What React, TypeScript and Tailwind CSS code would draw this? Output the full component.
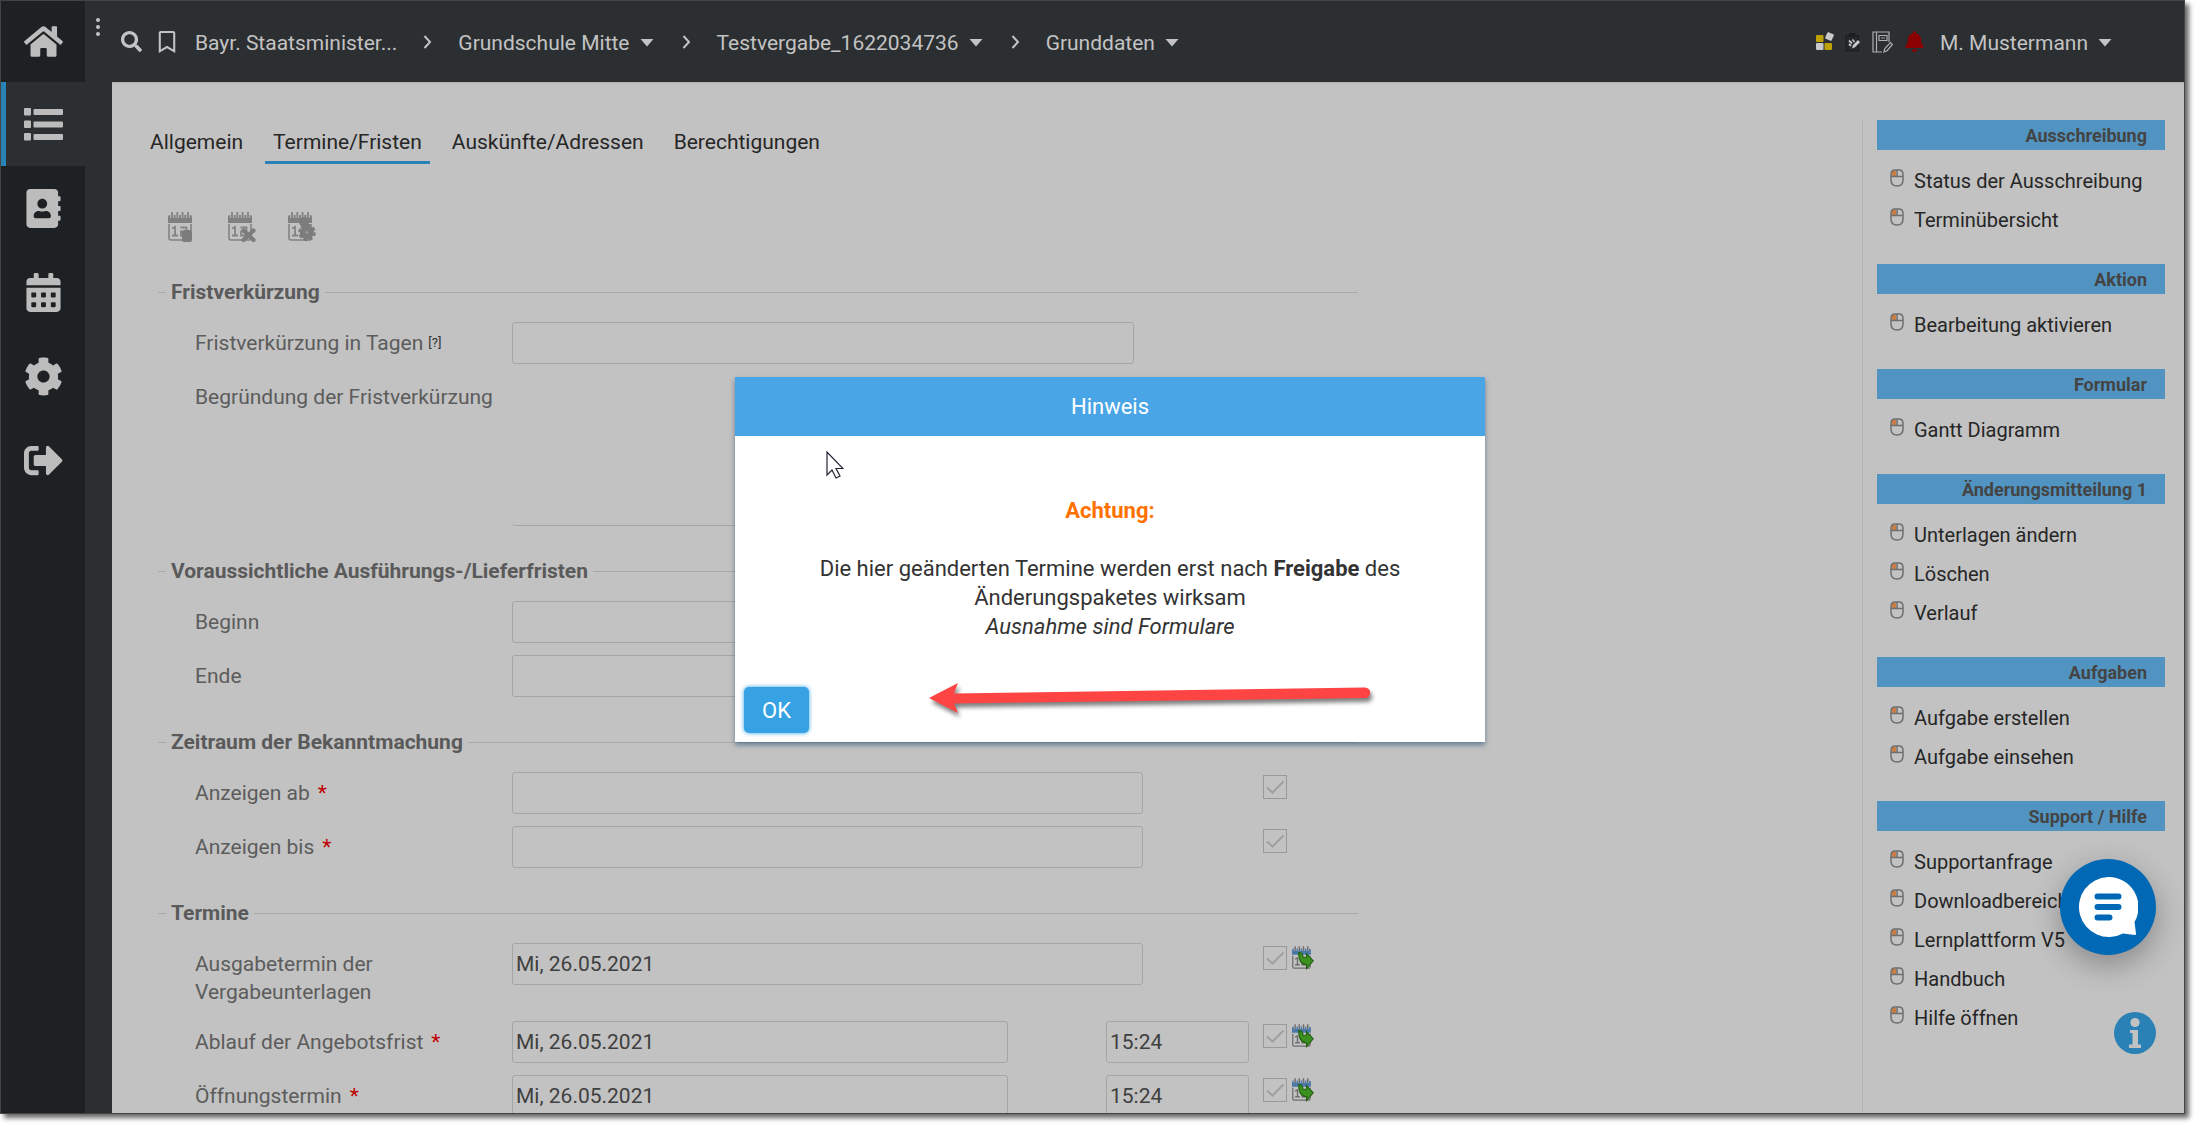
import React, { useState } from "react";
import {
  FaAddressBook,
  FaBell,
  FaCalendarAlt,
  FaCog,
  FaHome,
  FaRegBookmark,
  FaSearch,
  FaSignOutAlt,
} from "react-icons/fa";

type IconProps = { className?: string };

const ListIcon: React.FC<IconProps> = ({ className }) => (
  <svg viewBox="0 0 39 33" className={className} fill="currentColor">
    {[0, 12.5, 25].map((y) => (
      <g key={y}>
        <rect x="0" y={y} width="7" height="7.5" rx="1" />
        <rect x="9.5" y={y + 1} width="29.5" height="6" rx="1" />
      </g>
    ))}
  </svg>
);

const Caret: React.FC = () => (
  <svg viewBox="0 0 14 8" className="mr-0.5 h-2 w-3.5" fill="currentColor">
    <path d="M0.5 0h13L7 7.5z" />
  </svg>
);

const Chevron: React.FC = () => (
  <svg
    viewBox="0 0 9 14"
    className="h-3.5 w-[9px]"
    fill="none"
    stroke="currentColor"
    strokeWidth="2"
  >
    <path d="M1.5 1l5.5 6-5.5 6" />
  </svg>
);

const MouseIcon: React.FC = () => (
  <svg viewBox="0 0 14 18" className="mt-0.5 h-[18px] w-3.5 shrink-0" fill="none">
    <rect x="2" y="2" width="4" height="5" fill="#cc7c45" />
    <path
      d="M1 5.5C1 2.5 2.5 1 5 1h4c2.500 0 4 1.500 4 4.500v5.500c0 4-2.500 6-6 6s-6-2-6-6zM1 7.500h12M7 1v6.500"
      stroke="#6f6f6f"
      strokeWidth="1.500"
    />
  </svg>
);

const CalendarBase: React.FC<{ top: string; ink: string }> = ({ top, ink }) => (
  <>
    <path d="M1 12v14a2 2 0 0 0 2 2h18a2 2 0 0 0 2-2V12" fill="none" stroke={ink} strokeWidth="1.600" />
    <path d="M0 11V5a2 2 0 0 1 2-2h20a2 2 0 0 1 2 2v6z" fill={top} />
    <path d="M4 0v6M9.300 0v6M14.600 0v6M20 0v6" stroke="#c2c2c2" strokeWidth="3.400" />
    <path d="M4 0v6M9.300 0v6M14.600 0v6M20 0v6" stroke={ink} strokeWidth="1.800" />
    <path d="M4 16.500l3-1.500v8.500M4 23.500h6M12.500 15.500h6v4h-5.500v4h6" fill="none" stroke={ink} strokeWidth="1.800" />
  </>
);

const ToolbarCalendar: React.FC<{ kind: string }> = ({ kind }) => (
  <svg viewBox="0 0 28 30" className="h-[30px] w-7">
    <CalendarBase top="#808080" ink="#838383" />
    {kind === "trash" && <path d="M14 20l2-2h6l2 2v8a2 2 0 0 1-2 2h-6a2 2 0 0 1-2-2z" fill="#7c7c7c" />}
    {kind === "cross" && (
      <path d="M15.500 18.500l10 9.500M25.500 18.500l-10 9.500" stroke="#7c7c7c" strokeWidth="4.200" strokeLinecap="round" />
    )}
    {kind === "gear" && (
      <g fill="#7c7c7c">
        <circle cx="16" cy="10" r="5" />
        <circle cx="19" cy="20.500" r="7" />
        <circle cx="19" cy="20.500" r="7.600" fill="none" stroke="#7c7c7c" strokeWidth="2.400" strokeDasharray="3.500 2.470" />
        <circle cx="19" cy="20.500" r="1.500" fill="#999" />
      </g>
    )}
  </svg>
);

const TransferIcon: React.FC = () => (
  <svg viewBox="0 0 28 30" className="h-6 w-[22px]">
    <CalendarBase top="#4a78a8" ink="#6d6d6d" />
    <path
      d="M8.500 8c4 0 5.500 2 5.500 6h4.500V9.500l8.500 9-8.500 10V23.500c-6.500 0-10-5-10-15.500z"
      fill="#3c9020"
      stroke="#20600f"
      strokeWidth="1.400"
    />
  </svg>
);

const TilesIcon: React.FC = () => (
  <svg viewBox="0 0 18 19" className="h-[19px] w-[18px]">
    <rect x="0" y="3" width="7.500" height="7" rx="1" fill="#bfa106" />
    <rect x="0" y="11" width="7.500" height="7" rx="1" fill="#c9c9c9" />
    <rect x="8.500" y="11" width="7.500" height="7" rx="1" fill="#bfa106" />
    <rect x="10" y="1" width="7" height="7" rx="1" fill="#c9c9c9" transform="rotate(24 13.500 4.500)" />
  </svg>
);

const ClipboardIcon: React.FC = () => (
  <svg viewBox="0 0 16 20" className="h-5 w-4">
    <path d="M1 3.500h3V2h6v1.500h3.500V19H1z" fill="#24282a" stroke="#191c1e" />
    <path d="M4 1h6v4H4z" fill="#1a1d1f" />
    <path d="M4 8.500l3 3M4 12l2 2" stroke="#c2c2c2" strokeWidth="1.800" />
    <path d="M7 16.500l1-3.500 5-5 2 2.200-5 5z" fill="#c9c9c9" />
    <path d="M9.500 10l-2-2.500" stroke="#c2c2c2" strokeWidth="1.500" />
  </svg>
);

const NotebookIcon: React.FC = () => (
  <svg viewBox="0 0 21 22" className="h-[22px] w-[21px]" fill="none" stroke="#aeb0b1" strokeWidth="1.200">
    <path d="M10 21H1V1h16v10M4.500 1v20M7 4.500h8v5H7zM12 21l.800-3.500 5.700-6 2 2-5.500 6.200z" />
    <path d="M9 7h4" stroke="#8b8e90" />
  </svg>
);

const SIDEBAR = [
  { title: "Übersicht", icon: <ListIcon className="h-[33px] w-[39px]" />, active: true },
  { title: "Adressbuch", icon: <FaAddressBook size={39} /> },
  { title: "Kalender", icon: <FaCalendarAlt size={39} /> },
  { title: "Einstellungen", icon: <FaCog size={39} /> },
  { title: "Abmelden", icon: <FaSignOutAlt size={39} /> },
];

const CRUMBS = [
  { label: "Bayr. Staatsminister...", menu: false },
  { label: "Grundschule Mitte", menu: true },
  { label: "Testvergabe_1622034736", menu: true },
  { label: "Grunddaten", menu: true },
];

const TABS = ["Allgemein", "Termine/Fristen", "Auskünfte/Adressen", "Berechtigungen"];

const ACTIONS = [
  { title: "Ausschreibung", links: ["Status der Ausschreibung", "Terminübersicht"] },
  { title: "Aktion", links: ["Bearbeitung aktivieren"] },
  { title: "Formular", links: ["Gantt Diagramm"] },
  { title: "Änderungsmitteilung 1", links: ["Unterlagen ändern", "Löschen", "Verlauf"] },
  { title: "Aufgaben", links: ["Aufgabe erstellen", "Aufgabe einsehen"] },
  {
    title: "Support / Hilfe",
    links: ["Supportanfrage", "Downloadbereich", "Lernplattform V5", "Handbuch", "Hilfe öffnen"],
  },
];

const inputClass =
  "h-[42px] min-w-0 rounded-[3px] border border-[#a6a6a6] bg-transparent px-[3px] text-[#3f3f3f] outline-none";

const Section: React.FC<{ title: string; children: React.ReactNode }> = ({ title, children }) => (
  <section className="mb-[31px]">
    <div className="mb-4 flex h-7 items-center gap-[5px]">
      <span className="h-px w-2 bg-[#a9a9a9]" />
      <h2 className="font-bold text-[#5a5a5a]">{title}</h2>
      <span className="h-px flex-1 bg-[#a9a9a9]" />
    </div>
    <div className="flex flex-col gap-3 pl-[37px]">{children}</div>
  </section>
);

type RowProps = {
  id: string;
  label: string;
  required?: boolean;
  hint?: boolean;
  extra?: React.ReactNode;
  children: React.ReactNode;
};

const Row: React.FC<RowProps> = ({ id, label, required, hint, extra, children }) => (
  <div className="flex items-start">
    <div className="flex w-[317px] shrink-0 pt-[7px] pb-[3px] text-[#5c5c5c]">
      <label htmlFor={id} className="max-w-[300px]">
        {label}
        {required && <span className="ml-2 text-[#c00000]">*</span>}
      </label>
      {hint && <a href="#hilfe" className="ml-[5px] text-[13px] text-[#333]">[?]</a>}
    </div>
    <div className="flex flex-1 justify-between pr-3.5">{children}</div>
    <div className="flex w-[95px] shrink-0 items-start gap-[5px] pt-[3px]">{extra}</div>
  </div>
);

const Check: React.FC<{ label: string }> = ({ label }) => (
  <span className="relative flex h-6 w-6">
    <input
      type="checkbox"
      aria-label={label}
      defaultChecked
      className="peer h-6 w-6 appearance-none border border-[#999]"
    />
    <svg
      viewBox="0 0 24 24"
      className="pointer-events-none absolute inset-0 hidden peer-checked:block"
      fill="none"
      stroke="#a0a0a0"
      strokeWidth="2"
    >
      <path d="M4 12.500l5.500 5L20.500 6.500" />
    </svg>
  </span>
);

const DateTimeRow: React.FC<{ id: string; label: string }> = ({ id, label }) => (
  <Row
    id={id}
    label={label}
    required
    extra={
      <>
        <Check label={`${label} anzeigen`} />
        <button type="button" aria-label="Termin übernehmen"><TransferIcon /></button>
      </>
    }
  >
    <input id={id} defaultValue="Mi, 26.05.2021" className={`${inputClass} w-[496px]`} />
    <input aria-label={`${label} Uhrzeit`} defaultValue="15:24" className={`${inputClass} w-[143px]`} />
  </Row>
);

const Hinweis: React.FC<{ onClose: () => void }> = ({ onClose }) => (
  <div className="absolute inset-0 flex items-center justify-center pt-1 pl-[35px]">
    <div
      role="dialog"
      aria-label="Hinweis"
      className="relative w-[750px] bg-white text-[22px] shadow-[0_3px_5px_rgba(40,80,120,0.6)]"
    >
      <h2 className="flex h-[59px] items-center justify-center bg-[#49a5e5] pt-0.5 text-white">Hinweis</h2>
      <div className="px-20 pt-[60px] text-center leading-[29px] text-[#333]">
        <p className="mb-[29px] font-bold text-[#ff7200]">Achtung:</p>
        <p>
          Die hier geänderten Termine werden erst nach <b>Freigabe</b> des Änderungspaketes wirksam
        </p>
        <p className="italic">Ausnahme sind Formulare</p>
      </div>
      <div className="px-[9px] pt-[46px] pb-[9px]">
        <button
          onClick={onClose}
          className="h-[46px] w-[65px] rounded-[5px] bg-[#36a2e3] pt-0.5 text-white shadow-[0_0_4px_#36a2e3]"
        >
          OK
        </button>
      </div>
      <svg viewBox="0 0 18 28" className="absolute top-[74px] left-[91px] h-7 w-[18px]">
        <path d="M1 1v23l5-5 4 8 4-2-4-7.500h7z" fill="#fff" stroke="#223" strokeWidth="1.200" />
      </svg>
      <svg
        viewBox="0 0 450 40"
        className="absolute top-[301px] left-[190px] h-10 w-[450px] drop-shadow-[2px_4px_2px_rgba(0,0,0,0.5)]"
      >
        <path
          d="M4 20L33 5l-4 10.500L440 9.500a5 5 0 0 1 0 10.500L29 25.500 33 35z"
          fill="#ff4444"
        />
      </svg>
    </div>
  </div>
);

const App: React.FC = () => {
  const [tab, setTab] = useState("Termine/Fristen");
  const [open, setOpen] = useState(true);

  return (
    <div className="h-screen overflow-hidden bg-white pr-[15px] pb-[15px] font-[Roboto,sans-serif] text-[21px] leading-7">
      <div className="relative flex h-full border border-[#444] bg-[#2b2f31] shadow-[4px_4px_5px_rgba(0,0,0,0.6)]">
        <nav className="flex w-[84px] shrink-0 flex-col bg-[#1e2123] text-[#bcbcbc]">
          <button aria-label="Startseite" className="flex h-[81px] items-center justify-center">
            <FaHome size={39} />
          </button>
          {SIDEBAR.map((item) => (
            <button
              key={item.title}
              aria-label={item.title}
              className={
                item.active
                  ? "flex h-[84px] items-center justify-center border-l-5 border-[#2a81b5] bg-[#2b2f31] pr-[5px]"
                  : "flex h-[84px] items-center justify-center"
              }
            >
              {item.icon}
            </button>
          ))}
        </nav>

        <div className="flex min-w-0 flex-1 flex-col">
          <header className="flex h-[81px] shrink-0 items-center text-[#c3c3c3]">
            <button aria-label="Menü" className="mr-[21px] ml-[11px] flex h-12 flex-col gap-[3px]">
              <span className="h-1 w-1 rounded-full bg-current" />
              <span className="h-1 w-1 rounded-full bg-current" />
              <span className="h-1 w-1 rounded-full bg-current" />
            </button>
            <button aria-label="Suche"><FaSearch size={21} /></button>
            <button aria-label="Merken" className="mr-[17px] ml-3.5"><FaRegBookmark size={22} /></button>
            <div className="flex items-center gap-[26px]">
              {CRUMBS.map((crumb, i) => (
                <React.Fragment key={crumb.label}>
                  {i > 0 && <Chevron />}
                  <button className="flex items-center gap-2.5 pt-0.5">
                    {crumb.label}
                    {crumb.menu && <Caret />}
                  </button>
                </React.Fragment>
              ))}
            </div>
            <div className="mr-[70px] ml-auto flex items-center gap-[11px]">
              <TilesIcon />
              <ClipboardIcon />
              <NotebookIcon />
              <FaBell size={21} className="text-[#8b0000]" />
              <button className="ml-1 flex items-center gap-2.5 pt-0.5">
                M. Mustermann
                <Caret />
              </button>
            </div>
          </header>

          <div className="ml-[27px] flex min-h-0 flex-1 overflow-hidden border-t border-[#b0b0b0] bg-[#c2c2c2]">
            <main className="min-w-0 flex-1 overflow-hidden pt-[45px] pl-[30px]">
              <div className="flex gap-3.5 text-[#262626]" role="tablist">
                {TABS.map((name) => (
                  <button
                    key={name}
                    role="tab"
                    aria-selected={name === tab}
                    onClick={() => setTab(name)}
                    className={
                      name === tab
                        ? "border-b-3 border-[#2a81b5] px-2 pb-[5px]"
                        : "border-b-3 border-transparent px-2 pb-[5px]"
                    }
                  >
                    {name}
                  </button>
                ))}
              </div>

              <div className="mt-12 mb-9 ml-[26px] flex gap-8">
                <button aria-label="Termine löschen"><ToolbarCalendar kind="trash" /></button>
                <button aria-label="Termine verwerfen"><ToolbarCalendar kind="cross" /></button>
                <button aria-label="Termine berechnen"><ToolbarCalendar kind="gear" /></button>
              </div>

              <form className="ml-4 max-w-[1200px]">
                <Section title="Fristverkürzung">
                  <Row id="tage" label="Fristverkürzung in Tagen" hint>
                    <input id="tage" className={`${inputClass} w-[622px]`} />
                  </Row>
                  <Row id="grund" label="Begründung der Fristverkürzung">
                    <textarea
                      id="grund"
                      className="h-[150px] w-[622px] resize-none rounded-[3px] border-b border-[#a6a6a6] bg-transparent outline-none"
                    />
                  </Row>
                </Section>
                <Section title="Voraussichtliche Ausführungs-/Lieferfristen">
                  <Row id="beginn" label="Beginn">
                    <input id="beginn" className={`${inputClass} w-[622px]`} />
                  </Row>
                  <Row id="ende" label="Ende">
                    <input id="ende" className={`${inputClass} w-[622px]`} />
                  </Row>
                </Section>
                <Section title="Zeitraum der Bekanntmachung">
                  <Row id="ab" label="Anzeigen ab" required extra={<Check label="Anzeigen ab aktiv" />}>
                    <input id="ab" className={`${inputClass} w-[631px]`} />
                  </Row>
                  <Row id="bis" label="Anzeigen bis" required extra={<Check label="Anzeigen bis aktiv" />}>
                    <input id="bis" className={`${inputClass} w-[631px]`} />
                  </Row>
                </Section>
                <Section title="Termine">
                  <Row
                    id="ausgabe"
                    label="Ausgabetermin der Vergabeunterlagen"
                    extra={
                      <>
                        <Check label="Ausgabetermin anzeigen" />
                        <button type="button" aria-label="Termin übernehmen"><TransferIcon /></button>
                      </>
                    }
                  >
                    <input id="ausgabe" defaultValue="Mi, 26.05.2021" className={`${inputClass} w-[631px]`} />
                  </Row>
                  <DateTimeRow id="ablauf" label="Ablauf der Angebotsfrist" />
                  <DateTimeRow id="oeffnung" label="Öffnungstermin" />
                </Section>
              </form>
            </main>

            <aside className="mt-[37px] w-[322px] shrink-0 border-l border-[#b3b3b3] pr-[19px] pl-3.5">
              {ACTIONS.map((group) => (
                <div key={group.title} className="mb-[25px]">
                  <h3 className="mb-[11px] flex h-[30px] items-center justify-end bg-[#5294c1] pt-0.5 pr-[18px] text-[18px] font-bold text-[#444]">
                    {group.title}
                  </h3>
                  <ul>
                    {group.links.map((link) => (
                      <li key={link} className="h-[39px] pl-[13px]">
                        <a href="#aktion" className="flex gap-2.5 pt-[6px] text-[20px] text-[#262626]">
                          <MouseIcon />
                          {link}
                        </a>
                      </li>
                    ))}
                  </ul>
                </div>
              ))}
            </aside>
          </div>
        </div>

        <div className="absolute right-7 bottom-[59px] flex flex-col items-end gap-[57px]">
          <button
            aria-label="Chat öffnen"
            className="flex h-24 w-24 items-center justify-center rounded-full bg-[#0068b4] shadow-[0_10px_30px_rgba(0,0,0,0.3)]"
          >
            <svg viewBox="0 0 60 60" className="h-[60px] w-[60px]">
              <path d="M30 0a30 30 0 1 0 15 56.500l12 1.500c.800 0 1.200-.500 1-1.300L56.500 45A30 30 0 0 0 30 0z" fill="#fff" />
              <path d="M19.500 19.500h21M19.500 30h21M19.500 40.500h12" stroke="#0068b4" strokeWidth="6" strokeLinecap="round" />
            </svg>
          </button>
          <button aria-label="Information">
            <svg viewBox="0 0 42 42" className="h-[42px] w-[42px]">
              <circle cx="21" cy="21" r="21" fill="#2a81b5" />
              <circle cx="21" cy="10.500" r="4.600" fill="#c2c2c2" />
              <path d="M16 18h8v14.500h3V36H15v-3.500h3.500V21H16z" fill="#c2c2c2" />
            </svg>
          </button>
        </div>

        {open && <Hinweis onClose={() => setOpen(false)} />}
      </div>
    </div>
  );
};

export default App;
